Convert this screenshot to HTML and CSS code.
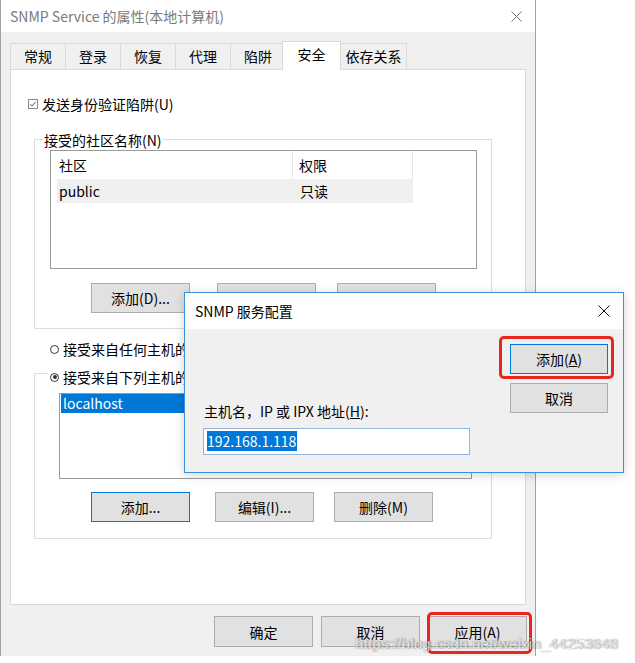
FILE: index.html
```html
<!DOCTYPE html>
<html lang="zh-CN">
  <head>
    <meta charset="UTF-8" />
    <meta name="viewport" content="width=device-width, initial-scale=1.0" />
    <title>SNMP Service 的属性</title>
    <link rel="stylesheet" href="styles.css">
  </head>
  <body>
    <div class="window">
      <div class="titlebar">
        <span class="title">SNMP Service 的属性(本地计算机)</span>
        <svg class="close" width="11" height="11" viewBox="0 0 11 11">
          <path d="M0.5 0.5 L10.5 10.5 M10.5 0.5 L0.5 10.5" stroke="#707070" stroke-width="1" fill="none" />
        </svg>
      </div>

      <div class="tabs">
        <div class="tab">常规</div>
        <div class="tab">登录</div>
        <div class="tab">恢复</div>
        <div class="tab">代理</div>
        <div class="tab">陷阱</div>
        <div class="tab active">安全</div>
        <div class="tab wide">依存关系</div>
      </div>

      <div class="panel">
        <div class="check-row">
          <svg class="checkbox" width="10" height="10" viewBox="0 0 10 10">
            <rect x="0.5" y="0.5" width="9" height="9" fill="#fff" stroke="#8a8a8a" />
            <path d="M2.2 5.2 L4.1 7 L7.8 2.8" stroke="#555" stroke-width="1" fill="none" />
          </svg>
          <span>发送身份验证陷阱(U)</span>
        </div>

        <div class="group community">
          <div class="group-label">接受的社区名称(N)</div>
          <div class="listview">
            <div class="lv-head">
              <div class="col1">社区</div>
              <div class="col2">权限</div>
            </div>
            <div class="lv-row">
              <div class="col1">public</div>
              <div class="col2">只读</div>
            </div>
          </div>
          <div class="btn-row">
            <button class="btn">添加(D)...</button>
            <button class="btn gap-27">编辑(E)...</button>
            <button class="btn gap-21">删除(R)</button>
          </div>
        </div>

        <div class="radio-row">
          <span class="radio"></span>
          <span>接受来自任何主机的 SNMP 数据包(C)</span>
        </div>

        <div class="group hosts">
          <div class="group-label radio-label">
            <span class="radio on"></span>
            <span>接受来自下列主机的 SNMP 数据包(T)</span>
          </div>
          <div class="hostlist">
            <div class="host selected">localhost</div>
          </div>
          <div class="btn-row">
            <button class="btn focused">添加...</button>
            <button class="btn gap-25">编辑(I)...</button>
            <button class="btn gap-20">删除(M)</button>
          </div>
        </div>
      </div>

      <div class="footer">
        <button class="btn tall">确定</button>
        <button class="btn tall">取消</button>
        <button class="btn tall marked apply">应用(A)</button>
      </div>
    </div>

    <div class="dialog">
      <div class="dlg-title">
        <span>SNMP 服务配置</span>
        <svg width="12" height="12" viewBox="0 0 12 12">
          <path d="M0.5 0.5 L11.5 11.5 M11.5 0.5 L0.5 11.5" stroke="#111" stroke-width="1" fill="none" />
        </svg>
      </div>
      <div class="dlg-body">
        <div class="dlg-left">
          <div class="dlg-label">主机名，IP 或 IPX 地址(<u>H</u>):</div>
          <div class="textbox"><span class="sel">192.168.1.118</span></div>
        </div>
        <div class="dlg-right">
          <button class="btn focused marked add">添加(<u>A</u>)</button>
          <button class="btn cancel">取消</button>
        </div>
      </div>
    </div>

    <div class="watermark">https://blog.csdn.net/weixin_44253848</div>
  </body>
</html>
```

FILE: styles.css
```css
*,
*::before,
*::after {
  box-sizing: border-box;
}

:root {
  --face: #f0f0f0;
  --line: #dcdcdc;
  --btn: #e1e1e1;
  --btn-border: #adadad;
  --blue: #0078d7;
  --red: #e8261e;
}

body {
  margin: 0;
  width: 635px;
  height: 663px;
  overflow: hidden;
  position: relative;
  background: #fff;
  font-family: "Noto Sans CJK SC", "Microsoft YaHei", sans-serif;
  font-size: 14px;
  line-height: 20px;
  color: #000;
}

/* main property window */
.window {
  width: 536px;
  height: 656px;
  background: var(--face);
  border-left: 1px solid #a0a0a0;
  border-right: 1px solid #a0a0a0;
}

.titlebar {
  height: 32px;
  background: #fff;
  display: flex;
  align-items: center;
  justify-content: space-between;
  padding: 0 13px 0 9px;
}

.title {
  color: #7a7a7a;
  font-size: 14px;
}

.tabs {
  height: 37px;
  display: flex;
  align-items: flex-end;
  padding-left: 9px;
}

.tab {
  width: 56px;
  height: 26px;
  margin-right: -1px;
  border: 1px solid #d9d9d9;
  border-bottom: none;
  text-align: center;
  line-height: 24px;
}

.tab.active {
  width: 59px;
  height: 29px;
  margin-left: -3px;
  margin-bottom: -1px;
  background: #fff;
  position: relative;
  z-index: 1;
  line-height: 24px;
}

.tab.wide {
  width: 67px;
}

.panel {
  margin-left: 9px;
  width: 516px;
  height: 536px;
  background: #fff;
  border: 1px solid #d9d9d9;
  padding: 24px 0 0 17px;
}

.check-row,
.radio-row {
  height: 20px;
  display: flex;
  align-items: center;
  gap: 4px;
}

.radio-row {
  margin: 10px 0 0 22px;
}

.radio {
  width: 9px;
  height: 9px;
  border: 1px solid #333;
  border-radius: 50%;
  background: #fff;
  position: relative;
}

.radio.on::after {
  content: "";
  position: absolute;
  left: 1.5px;
  top: 1.5px;
  width: 4px;
  height: 4px;
  border-radius: 50%;
  background: #333;
}

.group {
  margin: 25px 0 0 6px;
  width: 458px;
  border: 1px solid var(--line);
  padding-bottom: 15px;
}

.group.hosts {
  margin-top: 14px;
  padding-bottom: 16px;
}

.group-label {
  width: fit-content;
  margin: -10px 0 0 8px;
  padding: 0 1px;
  background: #fff;
}

.radio-label {
  display: flex;
  align-items: center;
  gap: 4px;
  margin: -7px 0 0 13px;
  padding: 0 2px;
}

/* community list view */
.listview {
  margin-left: 15px;
  width: 427px;
  height: 119px;
  border: 1px solid #9a9a9a;
}

.lv-head,
.lv-row {
  display: flex;
}

.lv-head {
  height: 28px;
  line-height: 28px;
}

.lv-head .col1 {
  width: 242px;
  padding-left: 8px;
  border-right: 1px solid #e5e5e5;
}

.lv-head .col2 {
  width: 120px;
  padding-left: 6px;
  border-right: 1px solid #e5e5e5;
}

.lv-row {
  margin-left: 6px;
  width: 356px;
  height: 24px;
  line-height: 24px;
  background: #efefef;
}

.lv-row .col1 {
  width: 236px;
  padding-left: 2px;
}

.lv-row .col2 {
  padding-left: 7px;
}

/* host list */
.hostlist {
  margin: 6px 0 0 24px;
  width: 413px;
  height: 86px;
  border: 1px solid #9a9a9a;
}

.host {
  height: 19px;
  line-height: 19px;
  margin: 0 1px;
  padding-left: 2px;
}

.host.selected {
  background: var(--blue);
  color: #fff;
}

/* buttons */
.btn-row {
  display: flex;
  margin: 14px 0 0 56px;
}

.hosts .btn-row {
  margin-top: 13px;
}

.btn {
  width: 99px;
  height: 30px;
  padding: 0;
  background: var(--btn);
  border: 1px solid var(--btn-border);
  font-family: inherit;
  font-size: 14px;
  color: #000;
}

.btn.focused {
  border-color: var(--blue);
}

.gap-27 { margin-left: 27px; }
.gap-21 { margin-left: 21px; }
.gap-25 { margin-left: 25px; }
.gap-20 { margin-left: 20px; }

.btn.tall {
  height: 31px;
}

.footer {
  display: flex;
  justify-content: flex-end;
  gap: 8px;
  padding: 11px 8px 0 0;
}

/* red annotation frames */
.marked {
  position: relative;
}

.marked::after {
  content: "";
  position: absolute;
  border: 3px solid var(--red);
  border-radius: 5px;
}

.apply::after {
  left: -2px;
  right: -6px;
  top: -5px;
  bottom: -8px;
}

.add::after {
  left: -12px;
  right: -7px;
  top: -9px;
  bottom: -6px;
}

/* SNMP service configuration dialog */
.dialog {
  position: absolute;
  left: 184px;
  top: 292px;
  width: 440px;
  height: 181px;
  border: 1px solid #3a8fd9;
  background: var(--face);
  box-shadow: 0 2px 10px rgba(0, 0, 0, 0.18);
  display: flex;
  flex-direction: column;
}

.dlg-title {
  height: 36px;
  background: #fff;
  display: flex;
  align-items: center;
  justify-content: space-between;
  padding: 0 13px 0 10px;
  font-size: 14px;
}

.dlg-body {
  flex: 1;
  display: flex;
  justify-content: space-between;
  padding: 0 15px 0 18px;
}

.dlg-left {
  padding-top: 72px;
}

.dlg-label {
  padding-left: 1px;
}

.textbox {
  margin-top: 7px;
  width: 267px;
  height: 27px;
  background: #fff;
  border: 1px solid #8fb6e3;
  padding: 3px 0 0 3px;
  line-height: 19px;
}

.sel {
  background: var(--blue);
  color: #fff;
  padding-right: 1px;
}

.dlg-right {
  display: flex;
  flex-direction: column;
  gap: 9px;
  padding-top: 15px;
}

.dlg-right .btn {
  width: 98px;
}

.watermark {
  position: absolute;
  left: 355px;
  top: 634px;
  font-family: "Liberation Sans", sans-serif;
  font-size: 15px;
  color: rgba(255, 255, 255, 0.85);
  text-shadow: 0 0 1px rgba(0, 0, 0, 0.55), 2px 0 1px rgba(0, 0, 0, 0.2);
  letter-spacing: 0.2px;
}
```
